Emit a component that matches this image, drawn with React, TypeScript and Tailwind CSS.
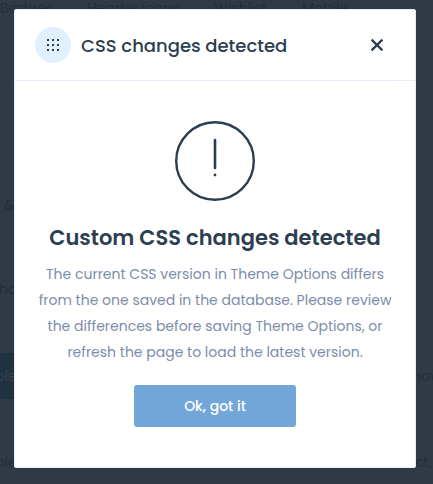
import type { ReactNode } from "react";

const message =
  "The current CSS version in Theme Options differs from the one saved in the database. Please review the differences before saving Theme Options, or refresh the page to load the latest version.";

function DotsIcon() {
  return (
    <svg width="14" height="14" viewBox="0 0 14 14" fill="#2c3e50" shapeRendering="crispEdges">
      {[1, 6, 11].map((y) =>
        [1, 6, 11].map((x) => <rect key={`${x}-${y}`} x={x} y={y} width="2" height="2" />)
      )}
    </svg>
  );
}

function CloseIcon() {
  return (
    <svg width="14" height="14" viewBox="0 0 14 14" fill="none" stroke="#2c3e50" strokeWidth="2.3">
      <path d="M1.6 1.6 12.4 12.4M12.4 1.6 1.6 12.4" />
    </svg>
  );
}

function AlertIcon() {
  return (
    <svg width="80" height="80" viewBox="0 0 80 80" fill="none" stroke="#2c3e50">
      <circle cx="40" cy="40" r="38.8" strokeWidth="2.4" />
      <path d="M40 19V47" strokeWidth="2.6" strokeLinecap="round" />
      <circle cx="40" cy="54" r="1.4" fill="#2c3e50" stroke="none" />
    </svg>
  );
}

function Row({ className, children }: { className: string; children?: ReactNode }) {
  return <div className={`flex shrink-0 items-center justify-between ${className}`}>{children}</div>;
}

function OptionsPage() {
  return (
    <div className="flex h-full flex-col bg-[#303a44] text-[14px] text-[#232e3a]">
      <div className="flex h-[93px] shrink-0 items-start border-b border-[#2e3842] leading-[16px] whitespace-nowrap">
        <span className="w-[87px]">Badges</span>
        <span className="w-[127px]">Header icons</span>
        <span className="w-[88px]">Wishlist</span>
        <span>Mobile</span>
      </div>
      <Row className="h-[91px] border-b border-[#2e3842]" />
      <Row className="h-[43px] border-b border-[#2e3842] pl-[4px]">&amp;</Row>
      <Row className="h-[42px] border-b border-[#2e3842]" />
      <Row className="h-[42px] border-b border-[#2e3842]">
        <span className="-ml-px">ho</span>
      </Row>
      <Row className="h-[42px]" />
      <Row className="h-[46px]">
        <span className="flex h-full w-[112px] items-center bg-[#203142] text-[#34424f]">
          <span className="-ml-[5px]">ple</span>
        </span>
        <span className="w-[21px]">nov</span>
      </Row>
      <Row className="h-[42px] border-b border-[#2e3842]" />
      <Row className="h-[43px]">
        <span className="-ml-[5px]">ple</span>
        <span className="w-[18px]">ct,</span>
      </Row>
      <div className="flex-1 pl-[33px]">
        <div className="h-full w-[78px] bg-[#203142]" />
      </div>
    </div>
  );
}

function Dialog() {
  return (
    <section
      role="dialog"
      className="absolute top-[9px] left-[14px] flex h-[459px] w-[402px] flex-col rounded-[2px] border border-[#e8ecf8] bg-white text-[#2c3e50]"
    >
      <header className="flex h-[71px] shrink-0 items-center border-b border-[#e8ecf8] pr-[31px] pl-[20px]">
        <span className="flex size-[36px] items-center justify-center rounded-full bg-[#e1f0ff]">
          <DotsIcon />
        </span>
        <h1 className="ml-[10px] flex-1 text-[18px] font-medium whitespace-nowrap">CSS changes detected</h1>
        <button aria-label="Close">
          <CloseIcon />
        </button>
      </header>
      <div className="flex flex-col items-center px-[20px] pt-[40px]">
        <AlertIcon />
        <h2 className="mt-[21px] text-[21px] leading-[32px] font-semibold whitespace-nowrap">
          Custom CSS changes detected
        </h2>
        <p className="mt-[7px] text-center text-[14px] leading-[26px] text-[#7c8cab]">{message}</p>
        <button className="mt-[20px] h-[42px] w-[162px] rounded-[3px] bg-[#72a5d8] text-[14px] font-medium text-white">
          Ok, got it
        </button>
      </div>
    </section>
  );
}

export default function App() {
  return (
    <main className="relative h-[484px] w-[433px] overflow-hidden font-['Poppins','Inter',sans-serif]">
      <OptionsPage />
      <Dialog />
    </main>
  );
}
